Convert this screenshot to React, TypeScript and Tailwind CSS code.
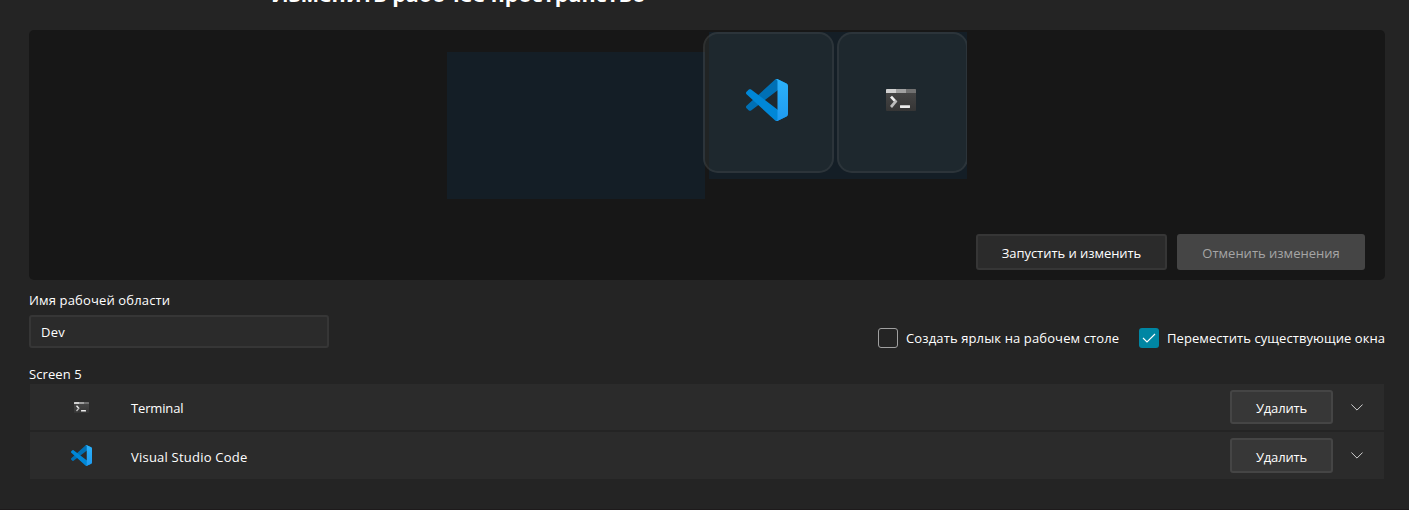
import React from "react";

function CodeIcon({ className }: { className: string }) {
  return (
    <svg viewBox="0 0 100 100" className={className}>
      <defs>
        <linearGradient id="front" x1="0" y1="0" x2="0" y2="1">
          <stop offset="0" stopColor="#2cb2fa" />
          <stop offset="1" stopColor="#1f9af0" />
        </linearGradient>
      </defs>
      <path fill="#0070b5" d="M96.46 10.8L75.86.88C73.47-.27 70.62.21 68.75 2.08L1.3 63.58C-.52 65.24-.51 68.09 1.3 69.75L6.81 74.75C8.3 76.1 10.53 76.2 12.13 74.99L93.36 13.37C96.09 11.3 100 13.25 100 16.67V16.43C100 14.03 98.62 11.84 96.46 10.8Z" />
      <path fill="#0087d7" d="M96.46 89.2L75.86 99.12C73.47 100.27 70.62 99.79 68.75 97.92L1.3 36.42C-.52 34.76-.51 31.91 1.3 30.25L6.81 25.25C8.3 23.9 10.53 23.8 12.13 25.01L93.36 86.63C96.09 88.7 100 86.75 100 83.33V83.57C100 85.97 98.62 88.16 96.46 89.2Z" />
      <path fill="url(#front)" d="M75.86 99.13C73.47 100.27 70.62 99.79 68.75 97.92C71.06 100.22 75 98.59 75 95.33V4.67C75 1.41 71.06-.22 68.75 2.08C70.62.21 73.47-.27 75.86.87L96.46 10.78C98.62 11.82 100 14.01 100 16.41V83.59C100 85.99 98.62 88.18 96.46 89.22Z" />
    </svg>
  );
}

function TerminalIcon({ className }: { className: string }) {
  return (
    <svg viewBox="0 0 30 22" className={className}>
      <defs>
        <linearGradient id="termBody" x1="0" y1="0" x2="0" y2="1">
          <stop offset="0" stopColor="#484848" />
          <stop offset="1" stopColor="#353535" />
        </linearGradient>
      </defs>
      <rect width="30" height="22" rx="1" fill="url(#termBody)" />
      <path d="M1 0H10V4H0V1Q0 0 1 0Z" fill="#d0d0d0" />
      <rect x="10" width="10" height="4" fill="#a0a0a0" />
      <path d="M20 0H29Q30 0 30 1V4H20Z" fill="#707070" />
      <path d="M5 7.6L9.6 12.6" stroke="#efefef" strokeWidth="2.7" fill="none" />
      <path d="M10.4 11.7L5 18" stroke="#bcbcbc" strokeWidth="2.7" fill="none" />
      <rect x="14" y="16.2" width="10" height="2.8" rx="0.4" fill="#ececec" />
    </svg>
  );
}

type RowProps = { name: string; icon: React.ReactNode; className: string; nameClass: string; buttonClass: string };

function AppRow({ name, icon, className, nameClass, buttonClass }: RowProps) {
  return (
    <div className={`flex items-center bg-[#2b2b2b] pr-[21px] ${className}`}>
      <div className="flex w-[101px] justify-center pl-px">{icon}</div>
      <span className={`grow pt-0.5 ${nameClass}`}>{name}</span>
      <button className={`mr-[18px] w-[103px] rounded-[3px] border-2 border-[#454545] bg-[#373737] tracking-[-0.15px] ${buttonClass}`}>
        Удалить
      </button>
      <svg viewBox="0 0 12 7" className="h-[7px] w-3">
        <path d="M0.4 0.5L6 6.1L11.6 0.5" fill="none" stroke="#d0d0d0" strokeWidth="1" />
      </svg>
    </div>
  );
}

export default function App() {
  return (
    <div className="flex h-[510px] w-[1409px] flex-col overflow-hidden border-b border-[#1d1a1b] bg-[#242424] pr-6 pl-[29px] font-['Open_Sans','Noto_Sans',sans-serif] text-[13px] leading-[18px] whitespace-nowrap text-white">
      <header className="h-[30px] shrink-0 pl-[242px]">
        <h1 className="-mt-[21px] text-[21.5px] leading-[30px] font-bold tracking-[0.03px]">Изменить рабочее пространство</h1>
      </header>

      <section className="flex h-[250px] shrink-0 flex-col justify-between rounded-[5px] bg-[#171717] pt-0.5 pr-5 pb-2.5">
        <div className="flex gap-1 pl-[418px]">
          <div className="mt-5 h-[147px] w-[258px] bg-[#141e26]" />
          <div className="relative h-[147px] w-[258px] bg-[#141e26]">
            <div className="absolute top-0 -left-1.5 flex h-[141px] w-[264px] gap-[3.5px] overflow-hidden">
              <div className="flex w-[130.5px] shrink-0 items-center justify-center rounded-[15px] border-2 border-white/[0.06] bg-[#394341]/30">
                <CodeIcon className="-mt-[5px] mr-[3px] h-[42px] w-[42px]" />
              </div>
              <div className="flex w-[130.5px] shrink-0 items-center justify-center rounded-[15px] border-2 border-white/[0.06] bg-[#394341]/30">
                <TerminalIcon className="-mt-[5px] -ml-[2px] h-[22px] w-[30px]" />
              </div>
            </div>
          </div>
        </div>
        <div className="flex justify-end gap-2.5">
          <button className="h-9 w-[191px] rounded-[3px] border-2 border-[#363636] bg-[#2b2b2b] pt-0.5 tracking-[-0.05px]">Запустить и изменить</button>
          <button className="h-9 w-[188px] rounded-[3px] bg-[#454545] pt-0.5 text-[#a5a5a5]">Отменить изменения</button>
        </div>
      </section>

      <section className="flex h-[68px] shrink-0 items-end justify-between">
        <div className="flex flex-col gap-[6px]">
          <label className="tracking-[0.15px]">Имя рабочей области</label>
          <div className="flex h-[33px] w-[300px] items-center rounded-[3px] border-2 border-[#363636] bg-[#2b2b2b] px-2.5 pt-px tracking-[0.2px]">Dev</div>
        </div>
        <div className="flex gap-5">
          <label className="flex items-center gap-2">
            <span className="h-5 w-5 rounded-[3px] border border-[#a0a0a0] bg-[#242424]" />
            <span className="w-[213px] tracking-[0.13px]">Создать ярлык на рабочем столе</span>
          </label>
          <label className="flex items-center gap-2">
            <span className="flex h-5 w-5 items-center justify-center rounded-[3px] bg-[#0086a3]">
              <svg viewBox="0 0 14 10" className="h-2.5 w-3.5">
                <path d="M1 5L5 9L13 1" fill="none" stroke="#fff" strokeWidth="1.1" />
              </svg>
            </span>
            <span className="w-[218px] tracking-[0.07px]">Переместить существующие окна</span>
          </label>
        </div>
      </section>

      <section className="pt-[17px] pr-px">
        <h2 className="h-[19px] tracking-[0.1px]">Screen 5</h2>
        <div className="ml-px flex flex-col gap-0.5">
          <AppRow
            className="h-[46px]"
            nameClass="tracking-[-0.15px]"
            buttonClass="h-[34px] pt-px"
            name="Terminal"
            icon={<TerminalIcon className="h-[11px] w-[15px]" />}
          />
          <AppRow
            className="h-[47px]"
            nameClass="tracking-[0.22px]"
            buttonClass="h-[35px] pt-0.5"
            name="Visual Studio Code"
            icon={<CodeIcon className="h-[21px] w-[21px]" />}
          />
        </div>
      </section>
    </div>
  );
}
